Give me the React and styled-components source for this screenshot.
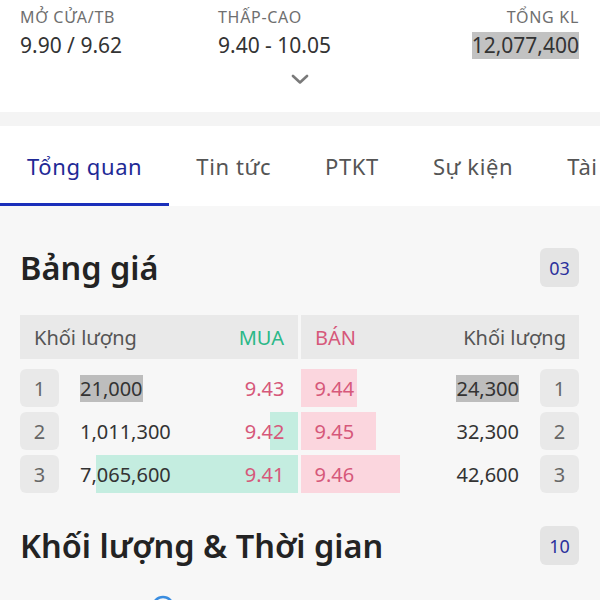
import styled, { createGlobalStyle } from "styled-components"

const GlobalStyle = createGlobalStyle`
    body {
        margin: 0;
        background: #f7f7f7;
        font-family: "Noto Sans", "Liberation Sans", sans-serif;
        overflow: hidden;
    }
`

const Page = styled.div`
    width: 600px;
    height: 600px;
    overflow: hidden;
    background: #f7f7f7;
`

const Summary = styled.div`
    background: white;
    height: 112px;
    box-sizing: border-box;
    padding: 7px 21px 0 20px;
`

const StatGrid = styled.div`
    display: grid;
    grid-template-columns: 198px 1fr auto;
`

const Stat = styled.div`
    display: flex;
    flex-direction: column;
    align-items: ${props => props.right ? 'flex-end' : 'flex-start'};
`

const Label = styled.span`
    font-size: 16px;
    line-height: 20px;
    color: #6f6f6f;
    letter-spacing: 0.7px;
`

const Value = styled.span`
    margin-top: 5px;
    font-size: 21px;
    line-height: 27px;
    color: #333;
    background: ${props => props.flash ? '#c2c2c2' : 'transparent'};
`

const ChevronRow = styled.div`
    display: flex;
    justify-content: center;
    margin-top: 15px;
`

const Gap = styled.div`
    height: 14px;
    background: #f4f4f4;
`

const Tabs = styled.div`
    display: flex;
    height: 80px;
    background: white;
    overflow: hidden;
    white-space: nowrap;
`

const Tab = styled.div`
    flex: none;
    display: flex;
    align-items: center;
    padding: 3px 27px 0;
    box-sizing: border-box;
    font-size: 22px;
    letter-spacing: 0.6px;
    color: ${props => props.active ? '#1f2a96' : '#555'};
    border-bottom: 3px solid ${props => props.active ? '#1a2fba' : 'transparent'};
`

const Content = styled.div`
    padding: 42px 21px 0 20px;
`

const SectionHead = styled.div`
    display: flex;
    justify-content: space-between;
    align-items: center;
    height: 39px;
    margin-top: ${props => props.spaced ? '33px' : '0'};
`

const Title = styled.h2`
    margin: 0;
    font-size: 32.5px;
    font-weight: 600;
    color: #232323;
    line-height: 39px;
`

const Badge = styled.div`
    width: 39px;
    height: 39px;
    border-radius: 6px;
    background: #e4e4e4;
    color: #2b309c;
    font-size: 18px;
    display: flex;
    align-items: center;
    justify-content: center;
`

const HeaderRow = styled.div`
    display: grid;
    grid-template-columns: 1fr 1fr;
    column-gap: 3px;
    margin-top: 28px;
`

const HeaderCell = styled.div`
    height: 44px;
    background: #e9e9e9;
    display: flex;
    align-items: center;
    justify-content: space-between;
    padding: 0 ${props => props.side === 'ask' ? '13px' : '14px'} 0 14px;
    font-size: 20px;
    color: #555;
`

const Side = styled.span`
    color: ${props => props.buy ? '#2bb888' : '#d6587a'};
`

const Rows = styled.div`
    display: flex;
    flex-direction: column;
    gap: 5px;
    margin-top: 10px;
`

const Row = styled.div`
    display: flex;
    height: 38px;
`

const Level = styled.div`
    flex: none;
    width: 39px;
    background: #e9e9e9;
    border-radius: 6px;
    color: #666;
    font-size: 20px;
    display: flex;
    align-items: center;
    justify-content: center;
`

const Cell = styled.div`
    flex: 1;
    position: relative;
    display: flex;
    align-items: center;
    justify-content: space-between;
    padding: ${props => props.side === 'ask' ? '0 21px 0 14px' : '0 13px 0 21px'};
    margin-left: ${props => props.side === 'ask' ? '3px' : '0'};
    font-size: 20px;
    color: #333;
    & > span {
        position: relative;
    }
`

const Bar = styled.div`
    position: absolute;
    top: 0;
    bottom: 0;
    ${props => props.side === 'ask' ? 'left: 0;' : 'right: 0;'}
    background: ${props => props.side === 'ask' ? '#fbd6de' : '#c4ede0'};
`

const Price = styled.span`
    color: #d6587a;
`

const Vol = styled.span`
    line-height: 27px;
    background: ${props => props.flash ? '#bdbdbd' : 'transparent'};
`

const Legend = styled.div`
    margin-top: 30px;
    padding-left: 131px;
`

const rows = [
    { level: 1, bidVol: '21,000', bid: '9.43', bidBar: 0, ask: '9.44', askBar: 56, askVol: '24,300', flash: true },
    { level: 2, bidVol: '1,011,300', bid: '9.42', bidBar: 28, ask: '9.45', askBar: 75, askVol: '32,300' },
    { level: 3, bidVol: '7,065,600', bid: '9.41', bidBar: 202, ask: '9.46', askBar: 99, askVol: '42,600' },
]

const tabs = ['Tổng quan', 'Tin tức', 'PTKT', 'Sự kiện', 'Tài chính']

function App() {
    return (
        <Page>
            <GlobalStyle />
            <Summary>
                <StatGrid>
                    <Stat>
                        <Label>MỞ CỬA/TB</Label>
                        <Value>9.90 / 9.62</Value>
                    </Stat>
                    <Stat>
                        <Label>THẤP-CAO</Label>
                        <Value>9.40 - 10.05</Value>
                    </Stat>
                    <Stat right>
                        <Label>TỔNG KL</Label>
                        <Value flash>12,077,400</Value>
                    </Stat>
                </StatGrid>
                <ChevronRow>
                    <svg width="18" height="10" viewBox="0 0 18 10">
                        <path d="M2 2 L9 8.5 L16 2" fill="none" stroke="#7a7a7a" strokeWidth="2.6" strokeLinecap="round" strokeLinejoin="round" />
                    </svg>
                </ChevronRow>
            </Summary>
            <Gap />
            <Tabs>
                {tabs.map((t, i) => (
                    <Tab key={t} active={i === 0}>{t}</Tab>
                ))}
            </Tabs>
            <Content>
                <SectionHead>
                    <Title>Bảng giá</Title>
                    <Badge>03</Badge>
                </SectionHead>
                <HeaderRow>
                    <HeaderCell>
                        <span>Khối lượng</span>
                        <Side buy>MUA</Side>
                    </HeaderCell>
                    <HeaderCell side="ask">
                        <Side>BÁN</Side>
                        <span>Khối lượng</span>
                    </HeaderCell>
                </HeaderRow>
                <Rows>
                    {rows.map(r => (
                        <Row key={r.level}>
                            <Level>{r.level}</Level>
                            <Cell>
                                <Bar style={{ width: r.bidBar }} />
                                <Vol flash={r.flash}>{r.bidVol}</Vol>
                                <Price>{r.bid}</Price>
                            </Cell>
                            <Cell side="ask">
                                <Bar side="ask" style={{ width: r.askBar }} />
                                <Price>{r.ask}</Price>
                                <Vol flash={r.flash}>{r.askVol}</Vol>
                            </Cell>
                            <Level>{r.level}</Level>
                        </Row>
                    ))}
                </Rows>
                <SectionHead spaced>
                    <Title>Khối lượng &amp; Thời gian</Title>
                    <Badge>10</Badge>
                </SectionHead>
                <Legend>
                    <svg width="24" height="24" viewBox="0 0 24 24">
                        <circle cx="12" cy="12" r="10" fill="none" stroke="#3a8de0" strokeWidth="2.5" />
                    </svg>
                </Legend>
            </Content>
        </Page>
    )
}

export default App
